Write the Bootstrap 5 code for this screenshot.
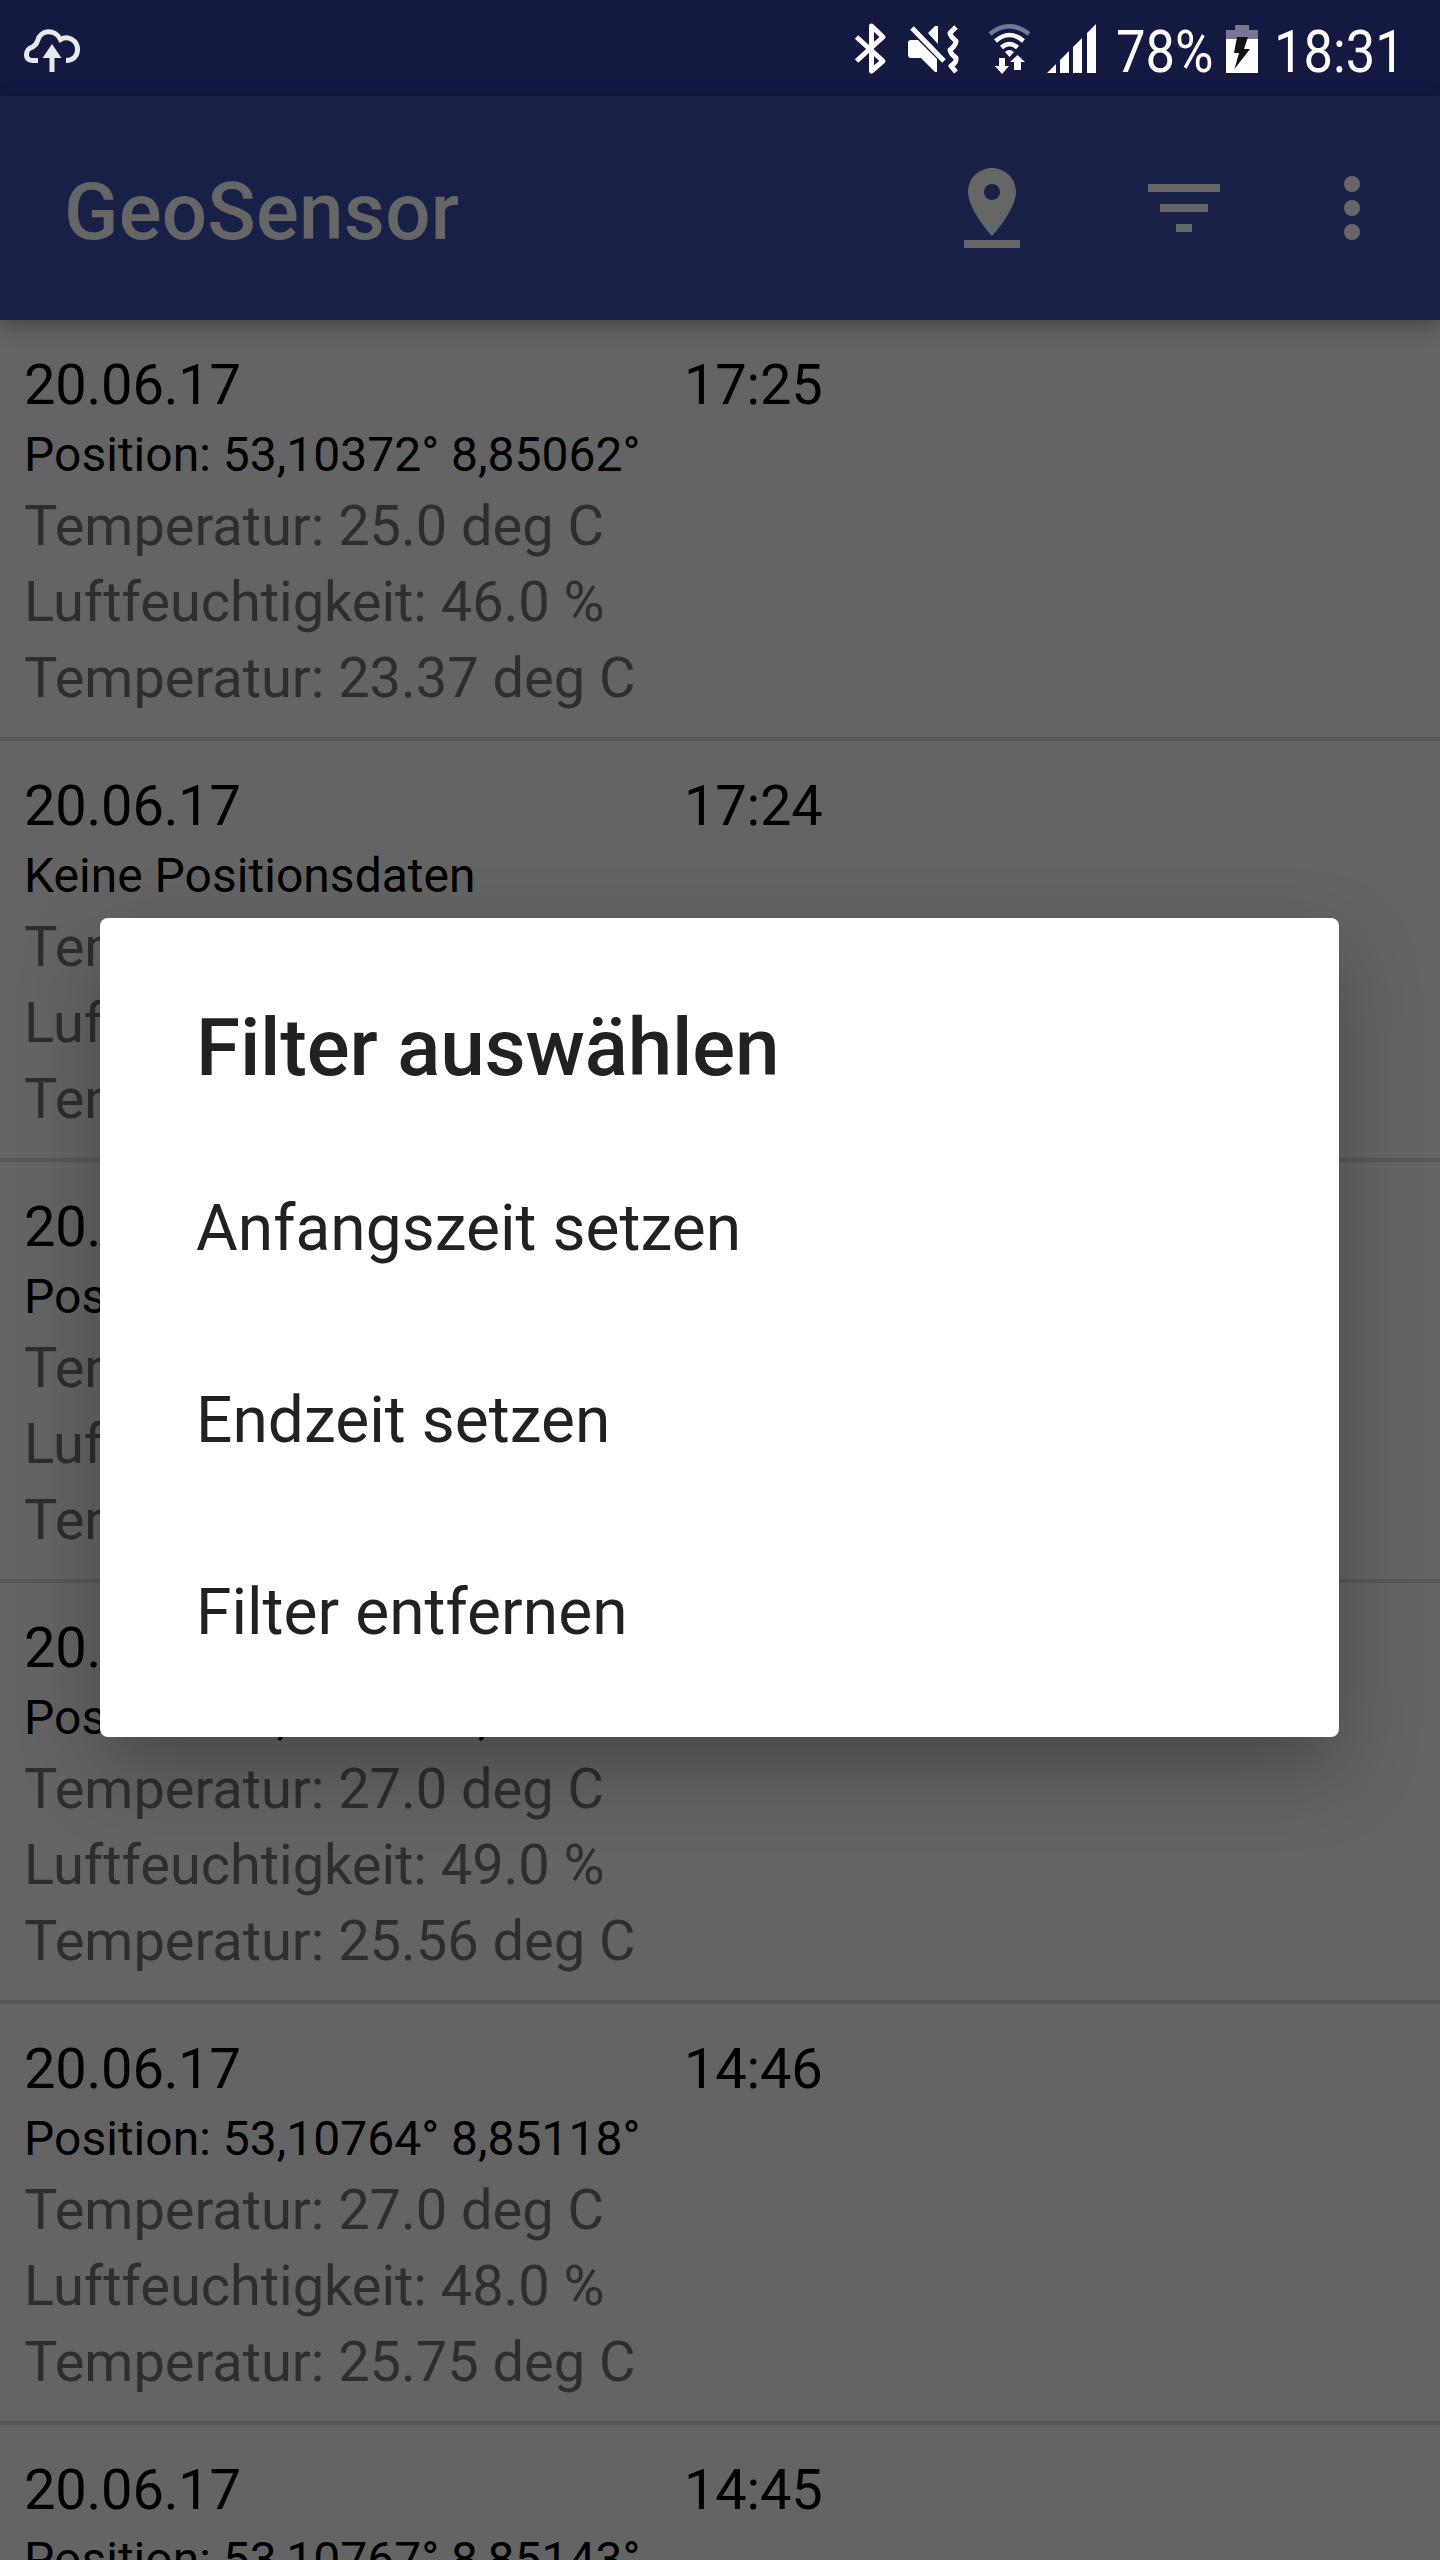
<!DOCTYPE html>
<html lang="de">
<head>
<meta charset="utf-8">
<title>GeoSensor</title>
<link href="https://cdn.jsdelivr.net/npm/bootstrap@5.3.0/dist/css/bootstrap.min.css" rel="stylesheet">
<script src="https://cdn.jsdelivr.net/npm/bootstrap@5.3.0/dist/js/bootstrap.bundle.min.js"></script>
<style>
html, body { height: 2560px; overflow: hidden; }
body { width: 1440px; background: #646464; color: #000; font-family: Roboto, sans-serif; }
.screen { width: 1440px; height: 2560px; }
.status { height: 96px; background: #131940; color: #fff; }
.status-text { display: block; font-size: 60px; line-height: 103px; height: 96px; white-space: nowrap; transform: scaleX(.875); transform-origin: left; }
.pct { width: 98px; }
.clock { width: 166px; }
.appbar { height: 224px; background: #192048; color: #666; padding: 0 40px 0 64px; box-shadow: 0 7px 18px rgba(0,0,0,.28); z-index: 1; }
.app-title { font-size: 80px; font-weight: 500; line-height: 94px; padding-top: 7px; letter-spacing: .2px; }
.entry { height: 421px; padding: 28px 24px 0; border-bottom: 4px solid #585858; }
.entry-head { font-size: 56px; line-height: 75px; height: 74px; letter-spacing: -.2px; }
.entry-date { width: 660px; }
.entry-pos { font-size: 48px; line-height: 66px; letter-spacing: .02px; }
.entry-val { font-size: 56px; line-height: 76px; color: #2e2e2e; letter-spacing: -.04px; }
.dialog-box { left: 100px; top: 918px; width: 1239px; height: 819px; border-radius: 8px; background: #fff; color: #212121; padding: 80px 96px 0; box-shadow: 0 32px 80px rgba(0,0,0,.28); z-index: 2; }
.dialog-title { font-size: 80px; font-weight: 500; line-height: 100px; margin: 0 0 35px; letter-spacing: -.17px; }
.dialog-item { font-size: 64px; line-height: 192px; height: 192px; letter-spacing: .04px; }
svg { display: block; flex: none; }
.more-icon { margin-left: -24px; }
</style>
</head>
<body>
<div class="screen position-relative d-flex flex-column overflow-hidden">
  <header class="status d-flex flex-shrink-0 justify-content-between">
    <svg width="96" height="96" viewBox="0 0 96 96" fill="none" stroke="#e8e9ee" stroke-width="5">
      <path d="M38 60.500H32C24.500 60.500 24.500 49 32.500 47C35 45.500 36.500 44 37.500 41C40.500 29 55.500 29 60.500 39.500C68 35 77.500 40.500 77.500 49.500C77.500 56 73 60.500 66 60.500"/>
      <path d="M52 72V56"/><path d="M52 44L61.500 58H42.500Z" fill="#e8e9ee" stroke="none"/>
    </svg>
    <div class="d-flex">
      <svg width="276" height="96" viewBox="840 0 276 96" fill="#fff">
        <path d="M856.500 37L883 61L871.500 71V26L883 37L856.500 61" fill="none" stroke="#fff" stroke-width="5" stroke-linejoin="round"/>
        <path d="M911 40H918L937 59V72H935L921 58H911Q908 58 908 55V43Q908 40 911 40ZM928 33L935 26H938V44Z"/>
        <path d="M912 28L944 61" stroke="#fff" stroke-width="5"/>
        <path d="M956 27L950 33Q950 36 956 41Q956 45 950 50Q950 53 956 58Q957 62 951 66L956 72" fill="none" stroke="#fff" stroke-width="5" stroke-linejoin="round"/>
        <g fill="none" stroke="#fff" stroke-width="4.500"><path d="M990 34Q1009.500 18.500 1029 34" stroke="#747891"/><path d="M995.500 41Q1009.500 29 1023.500 41M1001.500 47.500Q1009.500 40.500 1017.500 47.500"/></g>
        <path d="M1005 52Q1009.500 48 1014 52L1009.500 57ZM999 58H1005V66H1009L1002 74L995 66H999ZM1014 70H1021V62H1025L1017.500 55L1010 62H1014Z"/>
        <path d="M1047 73L1056 64V73ZM1060 60L1069 51V73H1060ZM1073 47L1082 38V73H1073ZM1087 33L1096 24V73H1087Z"/>
      </svg>
      <span class="status-text pct">78%</span>
      <svg width="60" height="96" viewBox="1214 0 60 96">
        <path d="M1235 25H1249V30H1258V39H1226V30H1235Z" fill="#747891"/><path d="M1226 39H1258V73H1226Z" fill="#fff"/>
        <path d="M1237 37H1248L1244 49H1250L1234.500 69L1239 53H1234Z" fill="#131313"/>
      </svg>
      <span class="status-text clock">18:31</span>
    </div>
  </header>
  <nav class="appbar d-flex flex-shrink-0 align-items-center justify-content-between position-relative">
    <span class="app-title">GeoSensor</span>
    <div class="d-flex align-items-center gap-5">
      <svg class="me-5" width="96" height="96" viewBox="0 0 24 24" fill="currentColor"><path d="M18 8c0-3.310-2.690-6-6-6S6 4.690 6 8c0 4.500 6 11 6 11s6-6.500 6-11zm-8 0c0-1.100.9-2 2-2s2 .9 2 2-.89 2-2 2-2-.9-2-2zM5 20v2h14v-2H5z"/></svg>
      <svg class="me-5" width="96" height="96" viewBox="0 0 24 24" fill="currentColor"><path d="M10 18h4v-2h-4v2zM3 6v2h18V6H3zm3 7h12v-2H6v2z"/></svg>
      <svg class="more-icon" width="96" height="96" viewBox="0 0 24 24" fill="currentColor"><circle cx="12" cy="6" r="2"/><circle cx="12" cy="12" r="2"/><circle cx="12" cy="18" r="2"/></svg>
    </div>
  </nav>
  <main>
    <section class="entry">
      <div class="entry-head d-flex"><span class="entry-date">20.06.17</span><span>17:25</span></div>
      <div class="entry-pos">Position: 53,10372° 8,85062°</div>
      <div class="entry-val">Temperatur: 25.0 deg C</div>
      <div class="entry-val">Luftfeuchtigkeit: 46.0 %</div>
      <div class="entry-val">Temperatur: 23.37 deg C</div>
    </section>
    <section class="entry">
      <div class="entry-head d-flex"><span class="entry-date">20.06.17</span><span>17:24</span></div>
      <div class="entry-pos">Keine Positionsdaten</div>
      <div class="entry-val">Temperatur:</div>
      <div class="entry-val">Luftfeuchtigkeit:</div>
      <div class="entry-val">Temperatur:</div>
    </section>
    <section class="entry">
      <div class="entry-head d-flex"><span class="entry-date">20.06.17</span></div>
      <div class="entry-pos">Position:</div>
      <div class="entry-val">Temperatur:</div>
      <div class="entry-val">Luftfeuchtigkeit:</div>
      <div class="entry-val">Temperatur:</div>
    </section>
    <section class="entry">
      <div class="entry-head d-flex"><span class="entry-date">20.06.17</span></div>
      <div class="entry-pos">Position: 53,10764° 8,85118°</div>
      <div class="entry-val">Temperatur: 27.0 deg C</div>
      <div class="entry-val">Luftfeuchtigkeit: 49.0 %</div>
      <div class="entry-val">Temperatur: 25.56 deg C</div>
    </section>
    <section class="entry">
      <div class="entry-head d-flex"><span class="entry-date">20.06.17</span><span>14:46</span></div>
      <div class="entry-pos">Position: 53,10764° 8,85118°</div>
      <div class="entry-val">Temperatur: 27.0 deg C</div>
      <div class="entry-val">Luftfeuchtigkeit: 48.0 %</div>
      <div class="entry-val">Temperatur: 25.75 deg C</div>
    </section>
    <section class="entry">
      <div class="entry-head d-flex"><span class="entry-date">20.06.17</span><span>14:45</span></div>
      <div class="entry-pos">Position: 53,10767° 8,85143°</div>
    </section>
  </main>
  <div class="dialog-box position-absolute" role="dialog">
    <h2 class="dialog-title">Filter auswählen</h2>
    <div class="dialog-item">Anfangszeit setzen</div>
    <div class="dialog-item">Endzeit setzen</div>
    <div class="dialog-item">Filter entfernen</div>
  </div>
</div>
</body>
</html>
